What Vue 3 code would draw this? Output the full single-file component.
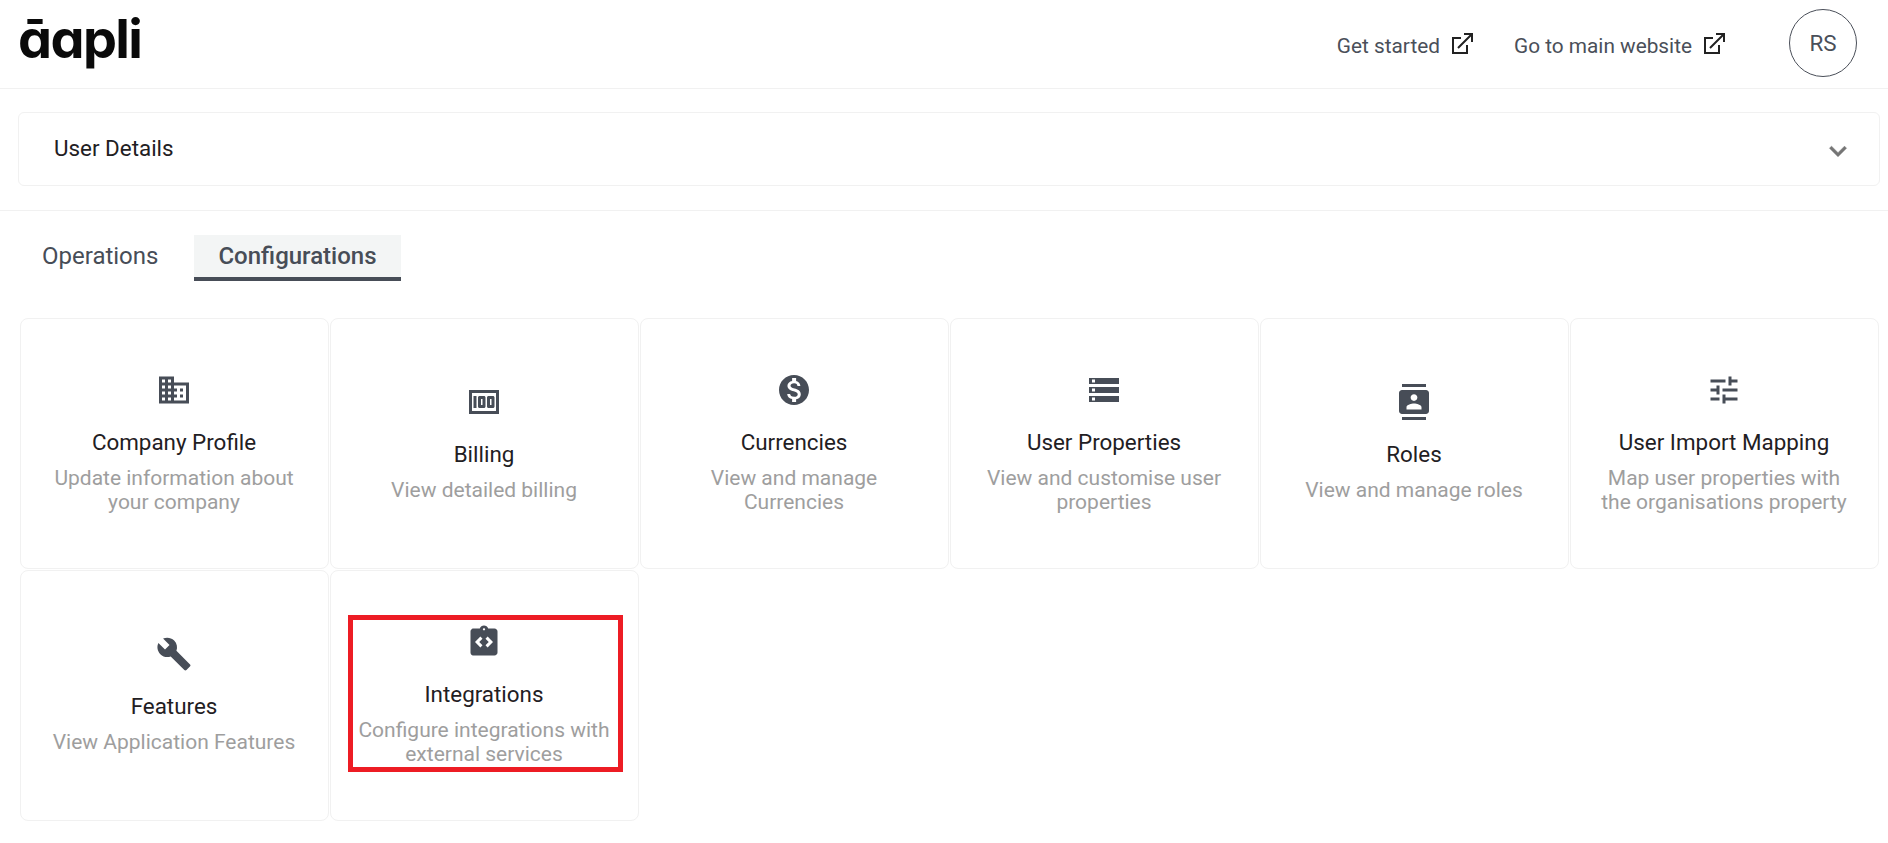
<script setup>
const icons = {
  domain: 'M12 7V3H2v18h20V7H12zM6 19H4v-2h2v2zm0-4H4v-2h2v2zm0-4H4V9h2v2zm0-4H4V5h2v2zm4 12H8v-2h2v2zm0-4H8v-2h2v2zm0-4H8V9h2v2zm0-4H8V5h2v2zm10 12h-8v-2h2v-2h-2v-2h2v-2h-2V9h8v10zm-2-8h-2v2h2v-2zm0 4h-2v2h2v-2z',
  money: 'M5 8h2v8H5zm7 0H9c-.55 0-1 .45-1 1v6c0 .55.45 1 1 1h3c.55 0 1-.45 1-1V9c0-.55-.45-1-1-1zm-1 6h-1v-4h1v4zm7-6h-3c-.55 0-1 .45-1 1v6c0 .55.45 1 1 1h3c.55 0 1-.45 1-1V9c0-.55-.45-1-1-1zm-1 6h-1v-4h1v4zM2 4v16h20V4H2zm2 14V6h16v12H4z',
  currency: 'M12 2C6.48 2 2 6.48 2 12s4.48 10 10 10 10-4.48 10-10S17.52 2 12 2zm1.41 16.09V20h-2.67v-1.93c-1.71-.36-3.16-1.46-3.27-3.4h1.96c.1 1.05.82 1.87 2.65 1.87 1.96 0 2.4-.98 2.4-1.59 0-.83-.44-1.61-2.67-2.14-2.48-.6-4.18-1.62-4.18-3.67 0-1.72 1.39-2.84 3.11-3.21V4h2.67v1.95c1.86.45 2.79 1.86 2.85 3.39H14.3c-.05-1.11-.64-1.87-2.22-1.87-1.5 0-2.4.68-2.4 1.64 0 .84.65 1.39 2.67 1.91s4.18 1.39 4.18 3.91c-.01 1.83-1.38 2.83-3.12 3.16z',
  storage: 'M2 20h20v-4H2v4zm2-3h2v2H4v-2zM2 4v4h20V4H2zm4 3H4V5h2v2zm-4 7h20v-4H2v4zm2-3h2v2H4v-2z',
  contacts: 'M20 0H4v2h16V0zM4 24h16v-2H4v2zM20 4H4c-1.1 0-2 .9-2 2v12c0 1.1.9 2 2 2h16c1.1 0 2-.9 2-2V6c0-1.1-.9-2-2-2zm-8 2.75c1.24 0 2.25 1.01 2.25 2.25s-1.01 2.25-2.25 2.25S9.75 10.24 9.75 9 10.76 6.75 12 6.75zM17 17H7v-1.5c0-1.67 3.33-2.5 5-2.5s5 .83 5 2.5V17z',
  tune: 'M3 17v2h6v-2H3zM3 5v2h10V5H3zm10 16v-2h8v-2h-8v-2h-2v6h2zM7 9v2H3v2h4v2h2V9H7zm14 4v-2H11v2h10zm-6-4h2V7h4V5h-4V3h-2v6z',
  build: 'M22.7 19l-9.1-9.1c.9-2.3.4-5-1.5-6.9-2-2-5-2.4-7.4-1.3L9 6 6 9 1.6 4.7C.4 7.1.9 10.1 2.9 12.1c1.9 1.9 4.6 2.4 6.9 1.5l9.1 9.1c.4.4 1 .4 1.4 0l2.3-2.3c.5-.4.5-1.1.1-1.4z',
  code: 'M19 3h-4.18C14.4 1.84 13.3 1 12 1c-1.3 0-2.4.84-2.82 2H5c-.14 0-.27.01-.4.04-.39.08-.74.28-1.01.55-.18.18-.33.4-.43.64-.1.23-.16.49-.16.77v14c0 .27.06.54.16.78s.25.45.43.64c.27.27.62.47 1.01.55.13.02.26.03.4.03h14c1.1 0 2-.9 2-2V5c0-1.1-.9-2-2-2zM11 14.17l-1.41 1.42L6 12l3.59-3.59L11 9.83 8.83 12 11 14.17zm1-9.92c-.41 0-.75-.34-.75-.75s.34-.75.75-.75.75.34.75.75-.34.75-.75.75zm2.41 11.34L13 14.17 15.17 12 13 9.83l1.41-1.42L18 12l-3.59 3.59z'
}
const links = ['Get started', 'Go to main website']
const cards = [
  { icon: 'domain', title: 'Company Profile', desc: 'Update information about your company' },
  { icon: 'money', title: 'Billing', desc: 'View detailed billing' },
  { icon: 'currency', title: 'Currencies', desc: 'View and manage Currencies' },
  { icon: 'storage', title: 'User Properties', desc: 'View and customise user properties' },
  { icon: 'contacts', title: 'Roles', desc: 'View and manage roles' },
  { icon: 'tune', title: 'User Import Mapping', desc: 'Map user properties with the organisations property' },
  { icon: 'build', title: 'Features', desc: 'View Application Features' },
  { icon: 'code', title: 'Integrations', desc: 'Configure integrations with external services', marked: true }
]
</script>

<template>
  <div class="page">
    <header class="topbar">
      <div class="logo">āapli</div>
      <nav class="links">
        <a v-for="l in links" :key="l" class="link">
          <span>{{ l }}</span>
          <svg class="ext" viewBox="0 0 24 24">
            <path d="M11 7H3v15h14v-8M8 17 22 3M14 3h8v8" />
          </svg>
        </a>
        <div class="avatar">RS</div>
      </nav>
    </header>

    <section class="details-wrap">
      <div class="details">
        <span class="details-label">User Details</span>
        <svg class="chevron" viewBox="0 0 24 24"><path d="M16.59 8.59 12 13.17 7.41 8.59 6 10l6 6 6-6z" /></svg>
      </div>
    </section>

    <div class="tabs">
      <div class="tab">Operations</div>
      <div class="tab active">Configurations</div>
    </div>

    <main class="grid">
      <div v-for="c in cards" :key="c.title" class="card">
        <svg class="icon" viewBox="0 0 24 24"><path :d="icons[c.icon]" /></svg>
        <div class="title">{{ c.title }}</div>
        <div class="desc">{{ c.desc }}</div>
        <div v-if="c.marked" class="marker"></div>
      </div>
    </main>
  </div>
</template>

<style>
html, body { margin: 0; background: #fff; }
</style>

<style scoped>
.page {
  width: 1888px;
  height: 843px;
  overflow: hidden;
  font-family: Roboto, "Liberation Sans", sans-serif;
  background: #fff;
}
.topbar {
  height: 88px;
  border-bottom: 1px solid #f1f1f1;
  display: flex;
  align-items: center;
  justify-content: space-between;
  padding: 0 31px 0 18px;
}
.logo {
  font-family: Inter, sans-serif;
  font-feature-settings: "cv11" 1;
  font-weight: 700;
  font-size: 54px;
  letter-spacing: -1.6px;
  color: #0a0a0a;
  line-height: 1;
  margin-top: -10px;
}
.links {
  display: flex;
  align-items: center;
}
.link {
  display: flex;
  align-items: center;
  gap: 10px;
  font-size: 20.8px;
  line-height: 24px;
  color: #4a4f59;
  margin-right: 40px;
}
.link span { margin-top: 4px; }
.link:last-of-type { margin-right: 63px; }
.ext {
  width: 24px;
  height: 24px;
  fill: none;
  stroke: #222;
  stroke-width: 2;
  margin-top: -2px;
}
.avatar {
  width: 68px;
  height: 68px;
  box-sizing: border-box;
  border: 1px solid #4a4f59;
  border-radius: 50%;
  display: flex;
  align-items: center;
  justify-content: center;
  font-size: 22.4px;
  color: #4a4f59;
  margin-top: -2px;
}
.details-wrap {
  padding: 23px 8px 24px 18px;
  border-bottom: 1px solid #f1f1f1;
}
.details {
  height: 74px;
  box-sizing: border-box;
  border: 1px solid #f1f1f1;
  border-radius: 6px;
  padding: 0 24px 0 35px;
  display: flex;
  align-items: center;
  justify-content: space-between;
  font-size: 22.4px;
  color: #1f2023;
}
.details-label { margin-bottom: 2px; }
.chevron {
  width: 34px;
  height: 34px;
  fill: #757575;
  stroke: #757575;
  stroke-width: 0.4;
  margin-top: 4px;
}
.tabs {
  display: flex;
  gap: 12px;
  padding: 24px 0 0 18px;
  height: 46px;
}
.tab {
  box-sizing: border-box;
  height: 46px;
  padding: 0 24px;
  font-size: 24px;
  color: #474d57;
  line-height: 42px;
}
.active {
  background: #f3f5f5;
  border-bottom: 4px solid #474d57;
  font-weight: 500;
}
.grid {
  display: grid;
  grid-template-columns: repeat(6, 310px);
  grid-auto-rows: 252px;
  padding: 37px 0 0 20px;
}
.card {
  position: relative;
  box-sizing: border-box;
  width: 309px;
  height: 251px;
  padding: 0 1px 1px 0;
  border: 1px solid #f1f1f1;
  border-radius: 8px;
  display: flex;
  flex-direction: column;
  align-items: center;
  justify-content: center;
  text-align: center;
}
.icon { width: 36px; height: 36px; fill: #474d57; }
.title {
  font-size: 22.4px;
  line-height: 24px;
  color: #1f2023;
  margin-top: 22px;
}
.desc {
  font-size: 21px;
  line-height: 24px;
  color: #9e9e9e;
  margin-top: 12px;
  width: 262px;
}
.marker {
  position: absolute;
  left: 17px;
  top: 44px;
  width: 275px;
  height: 157px;
  box-sizing: border-box;
  border: 5px solid #ed1c24;
}
</style>
